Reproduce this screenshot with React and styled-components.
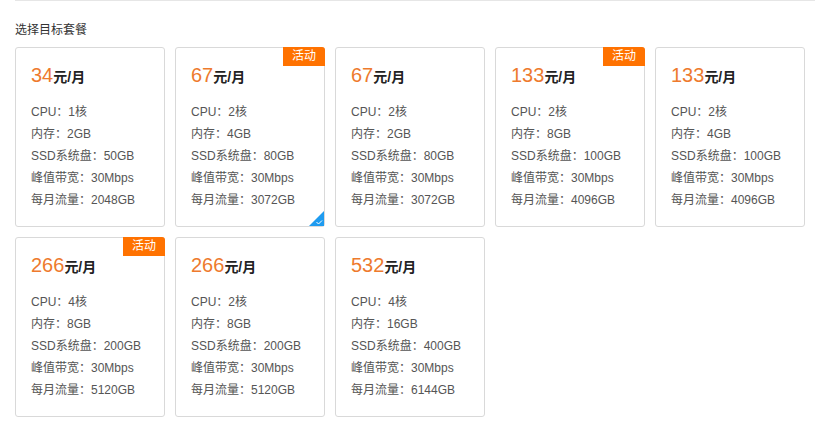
import React from 'react'
import styled, { createGlobalStyle } from 'styled-components'

const GlobalStyle = createGlobalStyle`
  body {
    margin: 0;
    background: #fff;
    font-family: "Liberation Sans", "Noto Sans CJK SC", sans-serif;
  }
`

const plans = [
  { price: 34, cpu: 1, ram: '2GB', ssd: '50GB', bw: '30Mbps', flow: '2048GB' },
  { price: 67, cpu: 2, ram: '4GB', ssd: '80GB', bw: '30Mbps', flow: '3072GB', promo: true, selected: true },
  { price: 67, cpu: 2, ram: '2GB', ssd: '80GB', bw: '30Mbps', flow: '3072GB' },
  { price: 133, cpu: 2, ram: '8GB', ssd: '100GB', bw: '30Mbps', flow: '4096GB', promo: true },
  { price: 133, cpu: 2, ram: '4GB', ssd: '100GB', bw: '30Mbps', flow: '4096GB' },
  { price: 266, cpu: 4, ram: '8GB', ssd: '200GB', bw: '30Mbps', flow: '5120GB', promo: true },
  { price: 266, cpu: 2, ram: '8GB', ssd: '200GB', bw: '30Mbps', flow: '5120GB' },
  { price: 532, cpu: 4, ram: '16GB', ssd: '400GB', bw: '30Mbps', flow: '6144GB' },
]

const CheckCorner = () => (
  <Corner width="15" height="15" viewBox="0 0 15 15">
    <path d="M15 0 L15 15 L0 15 Z" fill="#1e9bf0" />
    <path d="M7.5 11 L9.5 13 L13 9.5" stroke="#fff" strokeWidth="1" fill="none" />
  </Corner>
)

const App = () => {
  return (
    <Wrapper>
      <GlobalStyle />
      <TopRule />
      <Title>选择目标套餐</Title>
      <Grid>
        {plans.map((p, i) => (
          <Card key={i}>
            {p.promo && <Badge>活动</Badge>}
            <Price>
              <Amount>{p.price}</Amount>
              <Unit>元/月</Unit>
            </Price>
            <Specs>
              <Spec>CPU：{p.cpu}核</Spec>
              <Spec>内存：{p.ram}</Spec>
              <Spec>SSD系统盘：{p.ssd}</Spec>
              <Spec>峰值带宽：{p.bw}</Spec>
              <Spec>每月流量：{p.flow}</Spec>
            </Specs>
            {p.selected && <CheckCorner />}
          </Card>
        ))}
      </Grid>
    </Wrapper>
  )
}

export default App

const Wrapper = styled.div`
  width: 800px;
  margin-left: 15px;
`

const TopRule = styled.div`
  height: 1px;
  background: #e6e6e6;
`

const Title = styled.div`
  margin-top: 21px;
  height: 16px;
  line-height: 16px;
  font-size: 12px;
  color: #333;
`

const Grid = styled.div`
  display: grid;
  grid-template-columns: repeat(5, 150px);
  gap: 10px;
  margin-top: 9px;
`

const Card = styled.div`
  position: relative;
  box-sizing: border-box;
  height: 180px;
  padding: 14px 15px 0;
  border: 1px solid #d9d9d9;
  border-radius: 3px;
  background: #fff;
`

const Badge = styled.div`
  position: absolute;
  top: -1px;
  right: -1px;
  width: 42px;
  height: 19px;
  line-height: 19px;
  text-align: center;
  font-size: 12px;
  color: #fff;
  background: #ff7200;
  border-top-right-radius: 3px;
`

const Price = styled.div`
  height: 26px;
  line-height: 26px;
  white-space: nowrap;
`

const Amount = styled.span`
  font-size: 20px;
  color: #ee7a2d;
`

const Unit = styled.span`
  font-size: 14px;
  font-weight: bold;
  color: #222;
`

const Specs = styled.div`
  margin-top: 13px;
`

const Spec = styled.div`
  height: 22px;
  line-height: 22px;
  font-size: 12px;
  color: #555;
  white-space: nowrap;
`

const Corner = styled.svg`
  position: absolute;
  right: 0;
  bottom: 0;
  display: block;
`
